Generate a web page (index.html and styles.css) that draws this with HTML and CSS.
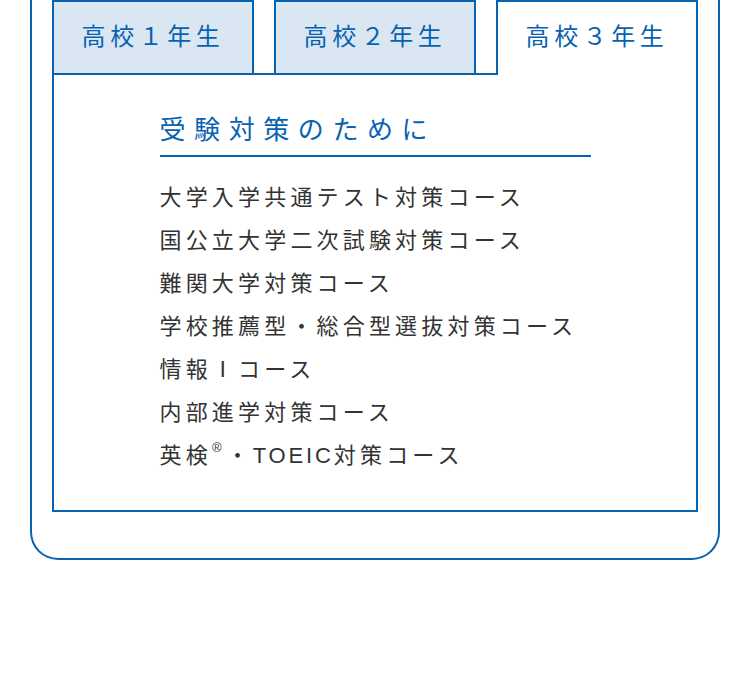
FILE: index.html
```html
<!DOCTYPE html>
<html lang="ja">
<head>
  <meta charset="UTF-8">
  <meta name="viewport" content="width=device-width, initial-scale=1.0">
  <title>コース案内</title>
  <link rel="stylesheet" href="styles.css">
</head>
<body>
  <div class="course-box">
    <ul class="tabs">
      <li class="tab">高校１年生</li>
      <li class="tab">高校２年生</li>
      <li class="tab is-active">高校３年生</li>
    </ul>

    <div class="panel">
      <div class="panel-inner">
        <h2 class="panel-title">受験対策のために</h2>
        <ul class="course-list">
          <li>大学入学共通テスト対策コース</li>
          <li>国公立大学二次試験対策コース</li>
          <li>難関大学対策コース</li>
          <li>学校推薦型・総合型選抜対策コース</li>
          <li>情報Ⅰコース</li>
          <li>内部進学対策コース</li>
          <li>英検<sup>®</sup>・<span class="latin">TOEIC</span>対策コース</li>
        </ul>
      </div>
    </div>
  </div>
</body>
</html>
```

FILE: styles.css
```css
* {
  margin: 0;
  padding: 0;
  box-sizing: border-box;
}

body {
  font-family: "Noto Sans CJK JP", "Noto Sans", sans-serif;
  background: #fff;
  color: #333;
}

ul {
  list-style: none;
}

.course-box {
  margin: 0 30px;
  padding: 0 20px 46px;
  border: 2px solid #0762b2;
  border-top: none;
  border-radius: 0 0 28px 28px;
}

.tabs {
  display: flex;
  gap: 20px;
}

.tab {
  flex: 1;
  height: 73px;
  display: flex;
  align-items: center;
  justify-content: center;
  background: #dae7f3;
  border: 2px solid #0762b2;
  border-bottom: none;
  color: #0762b2;
  font-size: 24px;
  letter-spacing: 0.19em;
  padding-bottom: 6px;
}

.tab.is-active {
  background: #fff;
  height: 75px;
  padding-bottom: 8px;
  margin-bottom: -2px;
  position: relative;
  z-index: 1;
}

.panel {
  border: 2px solid #0762b2;
}

.panel-inner {
  width: 431px;
  margin: 0 auto;
  padding: 35px 0 33px;
}

.panel-title {
  font-size: 26px;
  font-weight: 400;
  line-height: 36px;
  letter-spacing: 0.33em;
  color: #0762b2;
  padding-bottom: 9px;
  border-bottom: 2px solid #0762b2;
}

.course-list {
  margin-top: 17px;
}

.course-list li {
  font-size: 22px;
  line-height: 43px;
  letter-spacing: 0.19em;
  white-space: nowrap;
}

.course-list .latin {
  font-family: "Liberation Sans", Arial, sans-serif;
  letter-spacing: 0.13em;
}

.course-list sup {
  font-family: "Liberation Sans", Arial, sans-serif;
  font-size: 13px;
  vertical-align: top;
  line-height: 1;
  position: relative;
  top: 9px;
  letter-spacing: 0;
  margin-right: 5px;
}
```
